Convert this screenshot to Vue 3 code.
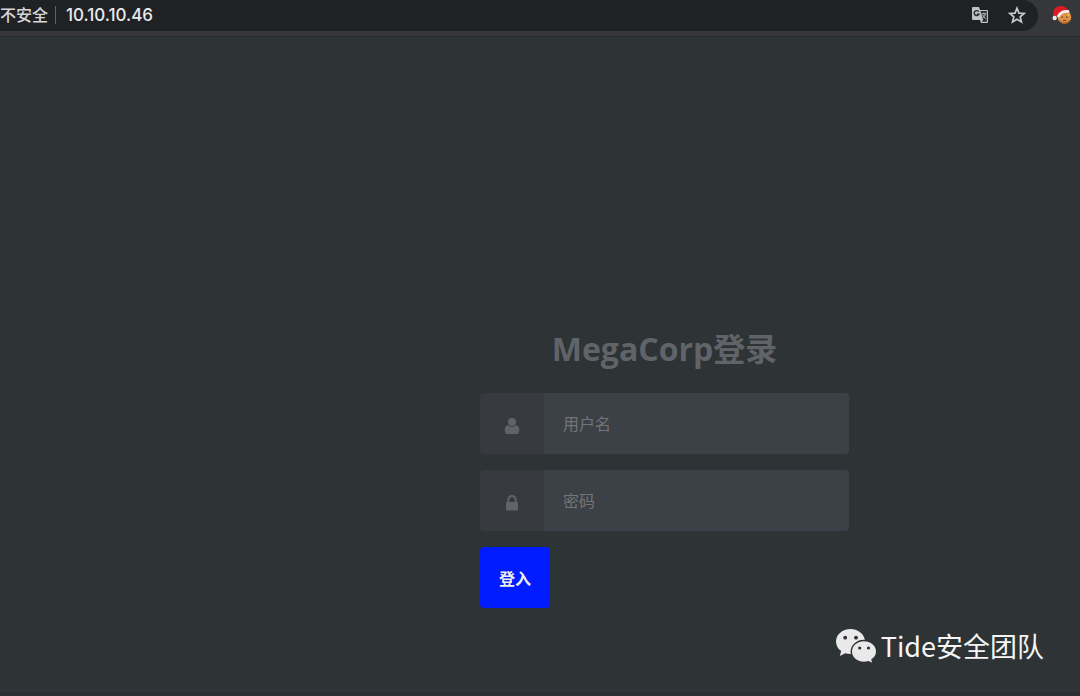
<script setup>
import { ref } from 'vue'

const username = ref('')
const password = ref('')
</script>

<template>
  <div class="window">
    <header class="toolbar">
      <div class="address">
        <span class="security">不安全</span>
        <span class="divider"></span>
        <span class="url">10.10.10.46</span>
        <button class="icon-button translate" type="button" aria-label="翻译">
          <svg width="18" height="18" viewBox="0 0 18 18">
            <path d="M2 1h6l1 3h7a1 1 0 0 1 1 1v11a1 1 0 0 1-1 1H10l-1-3H2a1 1 0 0 1-1-1V2a1 1 0 0 1 1-1z" fill="#bfc1c3" />
            <path d="M9.500 5h6.300v10.800h-5l1.300-1.800z" fill="#292a2d" />
            <path d="M7.800 5.700A2.500 2.500 0 1 0 8 8.200H5.800" fill="none" stroke="#292a2d" stroke-width="1.400" />
            <path d="M10.600 7.800h4.600M12.900 6.500v1.300M14.300 7.800c-.4 2-1.500 3.300-2.800 4.500M11.600 8.800c.6 1.500 1.700 2.700 3.200 4" fill="none" stroke="#bfc1c3" stroke-width="1" />
          </svg>
        </button>
        <button class="icon-button" type="button" aria-label="收藏">
          <svg width="18" height="18" viewBox="0 0 18 18">
            <path d="M9 2.200l2 4.900 5.200.4-4 3.400 1.300 5.100L9 13.200 4.500 16l1.300-5.100-4-3.400L7 7.100z" fill="none" stroke="#c8cacc" stroke-width="1.700" />
          </svg>
        </button>
      </div>
      <button class="extension" type="button" aria-label="扩展程序">
        <svg width="20" height="20" viewBox="0 0 20 20">
          <circle cx="12.500" cy="12" r="6.800" fill="#dc9347" />
          <path d="M6.500 14c2 4 8.500 5 12 0-1.500 6.500-10 6.500-12 0z" fill="#a95f28" />
          <path d="M1.500 12C0 6 3 1 8.500 1c4 0 7 2 8 5l-4 .5-6 4.500z" fill="#db1c22" />
          <path d="M6.500 11c2-3.500 5.500-4.800 9.500-4.500" fill="none" stroke="#f3eeee" stroke-width="2.800" stroke-linecap="round" />
          <circle cx="2.700" cy="13" r="2.200" fill="#eee9e8" />
          <path d="M9.500 12.200h1.500M14 12.200h1.500M11 15.500h3" stroke="#71401d" stroke-width="1.200" />
          <circle cx="16.500" cy="10" r="1" fill="#f4bd65" />
        </svg>
      </button>
    </header>

    <main class="page">
      <form class="login" @submit.prevent>
        <h1>MegaCorp登录</h1>
        <div class="field">
          <label for="username" aria-label="用户名">
            <svg width="16" height="18" viewBox="0 0 16 18">
              <circle cx="8" cy="5" r="4" fill="#606468" />
              <path d="M4 8.300c2.400 2.100 5.600 2.100 8 0 2.300.1 3.300 2.200 3.300 5.200 0 2-.9 3.500-2.800 3.500h-9C1.600 17 .7 15.500.7 13.500.7 10.500 1.700 8.400 4 8.300z" fill="#606468" />
            </svg>
          </label>
          <input id="username" v-model="username" type="text" placeholder="用户名" autocomplete="username" />
        </div>
        <div class="field">
          <label for="password" aria-label="密码">
            <svg width="16" height="18" viewBox="0 0 16 18">
              <path d="M4.300 9V5.700a3.700 3.700 0 0 1 7.400 0V9" fill="none" stroke="#606468" stroke-width="2" />
              <rect x="2" y="8" width="12" height="8.500" rx="1" fill="#606468" />
            </svg>
          </label>
          <input id="password" v-model="password" type="password" placeholder="密码" autocomplete="current-password" />
        </div>
        <button class="submit" type="submit">登入</button>
      </form>
      <div class="watermark">
        <svg width="42" height="36" viewBox="0 0 42 36">
          <path d="M15.500 1C7.500 1 1 6.500 1 13.500c0 4 2 7.300 5.200 9.600L4.800 28l5.400-2.800c1.700.5 3.400.8 5.300.8 8 0 14.500-5.600 14.500-12.500S23.500 1 15.500 1z" fill="#e9e9e9" />
          <path d="M29 12.500c-7 0-12.700 4.900-12.700 11S22 34.500 29 34.500c1.600 0 3.100-.3 4.500-.8l4.700 2.100-1.200-4.100c2.900-2 4.700-4.900 4.700-8.200 0-6.100-5.700-11-12.700-11z" fill="#e9e9e9" stroke="#2d3236" stroke-width="1.400" />
          <g fill="#2d3236">
            <circle cx="10.200" cy="9.700" r="1.900" />
            <circle cx="21" cy="9.700" r="1.900" />
            <circle cx="24.700" cy="20" r="1.600" />
            <circle cx="33.500" cy="20" r="1.600" />
          </g>
        </svg>
        <span>Tide安全团队</span>
      </div>
    </main>
  </div>
</template>

<style>
body {
  background: #2e3336;
}
</style>

<style scoped>
.window {
  display: flex;
  flex-direction: column;
  min-height: 100vh;
  box-sizing: border-box;
  border-bottom: 4px solid #2b2e32;
  background: #2e3336;
  font-family: "Open Sans", "Noto Sans CJK SC", sans-serif;
}

.toolbar {
  display: flex;
  align-items: flex-start;
  background: #36373b;
  border-bottom: 1px solid #292b2e;
  padding-bottom: 5px;
}

.address {
  display: flex;
  align-items: center;
  flex: 1;
  height: 31px;
  padding: 0 12px 2px 0;
  box-sizing: border-box;
  background: #202124;
  border-radius: 0 16px 16px 0;
  font-family: Inter, "Noto Sans CJK SC", sans-serif;
  font-size: 16px;
  font-weight: 500;
  line-height: 24px;
  color: #e8eaed;
}

.security {
  color: #d5d7da;
}

.divider {
  width: 1px;
  height: 18px;
  margin: 0 10px 0 7px;
  background: #606265;
}

.url {
  flex: 1;
  font-size: 17px;
}

.icon-button,
.extension {
  display: flex;
  padding: 0;
  border: 0;
  background: none;
}

.translate {
  margin-right: 19px;
}

.extension {
  margin: 5px 8px 0 14px;
}

.page {
  display: flex;
  flex: 1;
  flex-direction: column;
  justify-content: flex-end;
}

.login {
  width: 369px;
  margin-left: 480px;
}

h1 {
  margin: 0 0 20px;
  text-align: center;
  font-size: 32px;
  font-weight: 700;
  line-height: 48px;
  color: #606468;
}

.field {
  display: flex;
  height: 61px;
  margin-bottom: 16px;
  overflow: hidden;
  border-radius: 4px;
}

.field label {
  display: flex;
  align-items: center;
  justify-content: center;
  width: 64px;
  padding-top: 4px;
  box-sizing: border-box;
  background: #373a3e;
}

.field input {
  flex: 1;
  min-width: 0;
  padding: 0 19px;
  border: 0;
  outline: 0;
  background: #3c4148;
  color: #eeeeee;
  font: inherit;
  font-size: 16px;
}

.field input::placeholder {
  color: #747575;
  opacity: 1;
}

.submit {
  height: 61px;
  padding: 0 19px;
  border: 0;
  border-radius: 4px;
  background: #001cff;
  color: #eeeeee;
  font: inherit;
  font-size: 16px;
  font-weight: 700;
}

.watermark {
  display: flex;
  align-items: center;
  align-self: flex-end;
  gap: 4px;
  margin: 18px 36px 26px 0;
  font-family: "Noto Sans CJK SC", sans-serif;
  font-size: 27px;
  line-height: 40px;
  color: #f5f5f5;
}
</style>
